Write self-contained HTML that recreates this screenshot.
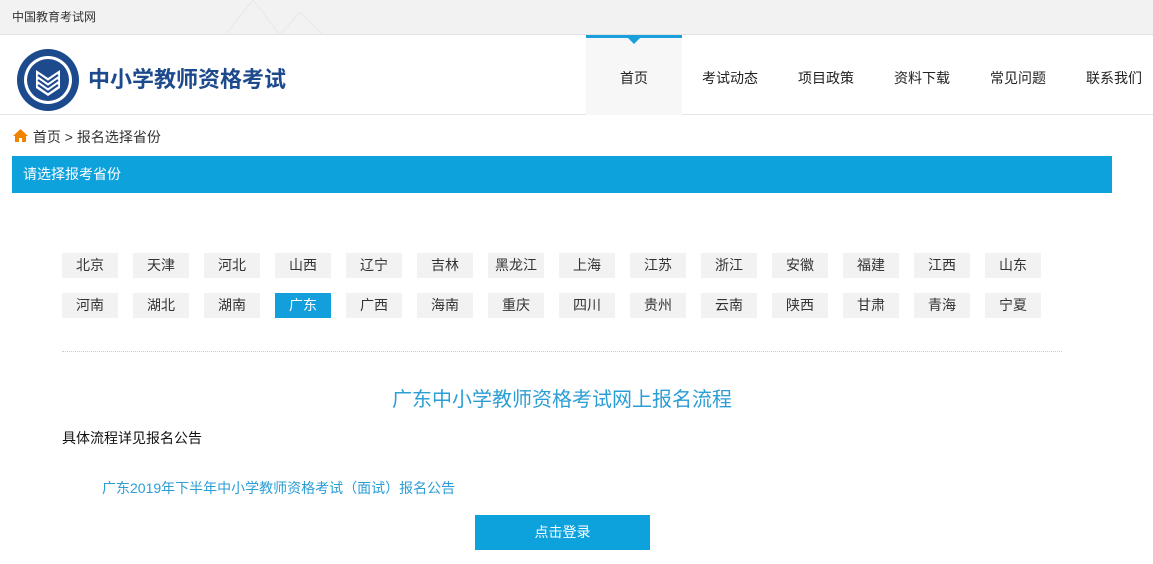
<!DOCTYPE html>
<html><head><meta charset="utf-8"><style>
*{margin:0;padding:0;box-sizing:border-box}
body{width:1153px;height:564px;overflow:hidden;background:#fff;font-family:"Liberation Sans","Noto Sans CJK SC",sans-serif;color:#333;position:relative}
.top{position:absolute;left:0;top:0;width:1153px;height:35px;background:#f2f2f2;border-bottom:1px solid #e2e2e2;font-size:12px;line-height:34px;padding-left:12px;color:#333}
.header{position:absolute;top:35px;left:0;width:1153px;height:80px;border-bottom:1px solid #e4e4e4}
.logo{position:absolute;left:16px;top:13px}
.title{position:absolute;left:88px;top:27px;font-size:22px;font-weight:bold;color:#1c4a8c}
.nav a{position:absolute;top:0;width:96px;height:80px;line-height:86px;text-align:center;font-size:14px;color:#222;text-decoration:none}
.nav a.on{background:#f7f7f7;border-top:3px solid #19a0dc;line-height:80px}
.nav a.on:after{content:"";position:absolute;left:42px;top:0;border:6px solid transparent;border-top-color:#19a0dc}
.crumb{position:absolute;left:12px;top:127px;font-size:14px;color:#333}
.bar{position:absolute;left:12px;top:156px;width:1100px;height:37px;background:#0ea2dd;color:#fff;font-size:14px;line-height:36px;padding-left:11px}
.p{position:absolute;width:56px;height:25px;background:#f2f2f2;font-size:14px;text-align:center;line-height:25px;color:#333}
.p.on{background:#129fdb;color:#fff}
.hr{position:absolute;left:62px;top:351px;width:1000px;border-top:1px dotted #ccc}
.h2{position:absolute;left:0;width:1124px;top:383px;text-align:center;font-size:20px;color:#2b9ed6}
.t1{position:absolute;left:62px;top:428px;font-size:14px;color:#111}
.t2{position:absolute;left:102px;top:478px;font-size:14px;color:#2b9ed6}
.btn{position:absolute;left:475px;top:515px;width:175px;height:35px;background:#0ea2dd;color:#fff;font-size:14px;text-align:center;line-height:35px}
</style></head><body>
<div class="top">中国教育考试网</div>
<svg style="position:absolute;left:225px;top:0" width="110" height="35"><path d="M0 35 L28 0 M28 0 L55 35 M55 35 L75 12 L98 35" stroke="#ebebeb" stroke-width="1.5" fill="none"/></svg>
<div class="header">
<svg class="logo" width="64" height="64" viewBox="0 0 64 64"><circle cx="32" cy="32" r="31" fill="#1c4a8c"/><circle cx="32" cy="32" r="24" fill="#fff"/><circle cx="32" cy="32" r="21" fill="#1c4a8c"/><path d="M20 22 L32 30 L44 22 L44 40 L32 48 L20 40Z" fill="#fff"/><path d="M22 27 L32 34 L42 27 M22 32 L32 39 L42 32 M22 37 L32 44 L42 37" stroke="#1c4a8c" stroke-width="2" fill="none"/></svg>
<div class="title">中小学教师资格考试</div>
<div class="nav"><a class="on" style="left:586px">首页</a><a style="left:682px">考试动态</a><a style="left:778px">项目政策</a><a style="left:874px">资料下载</a><a style="left:970px">常见问题</a><a style="left:1066px">联系我们</a></div>
</div>
<div class="crumb"><svg width="17" height="15" viewBox="0 0 17 15" style="vertical-align:-1px"><path d="M8.5 1 L1 8 L3 8 L3 14 L7 14 L7 10 L10 10 L10 14 L14 14 L14 8 L16 8Z" fill="#f08300"/></svg> 首页 &gt; 报名选择省份</div>
<div class="bar">请选择报考省份</div>
<div class="p" style="left:62px;top:253px">北京</div><div class="p" style="left:133px;top:253px">天津</div><div class="p" style="left:204px;top:253px">河北</div><div class="p" style="left:275px;top:253px">山西</div><div class="p" style="left:346px;top:253px">辽宁</div><div class="p" style="left:417px;top:253px">吉林</div><div class="p" style="left:488px;top:253px">黑龙江</div><div class="p" style="left:559px;top:253px">上海</div><div class="p" style="left:630px;top:253px">江苏</div><div class="p" style="left:701px;top:253px">浙江</div><div class="p" style="left:772px;top:253px">安徽</div><div class="p" style="left:843px;top:253px">福建</div><div class="p" style="left:914px;top:253px">江西</div><div class="p" style="left:985px;top:253px">山东</div>
<div class="p" style="left:62px;top:293px">河南</div><div class="p" style="left:133px;top:293px">湖北</div><div class="p" style="left:204px;top:293px">湖南</div><div class="p on" style="left:275px;top:293px">广东</div><div class="p" style="left:346px;top:293px">广西</div><div class="p" style="left:417px;top:293px">海南</div><div class="p" style="left:488px;top:293px">重庆</div><div class="p" style="left:559px;top:293px">四川</div><div class="p" style="left:630px;top:293px">贵州</div><div class="p" style="left:701px;top:293px">云南</div><div class="p" style="left:772px;top:293px">陕西</div><div class="p" style="left:843px;top:293px">甘肃</div><div class="p" style="left:914px;top:293px">青海</div><div class="p" style="left:985px;top:293px">宁夏</div>
<div class="hr"></div>
<div class="h2">广东中小学教师资格考试网上报名流程</div>
<div class="t1">具体流程详见报名公告</div>
<div class="t2">广东2019年下半年中小学教师资格考试（面试）报名公告</div>
<div class="btn">点击登录</div>
</body></html>
